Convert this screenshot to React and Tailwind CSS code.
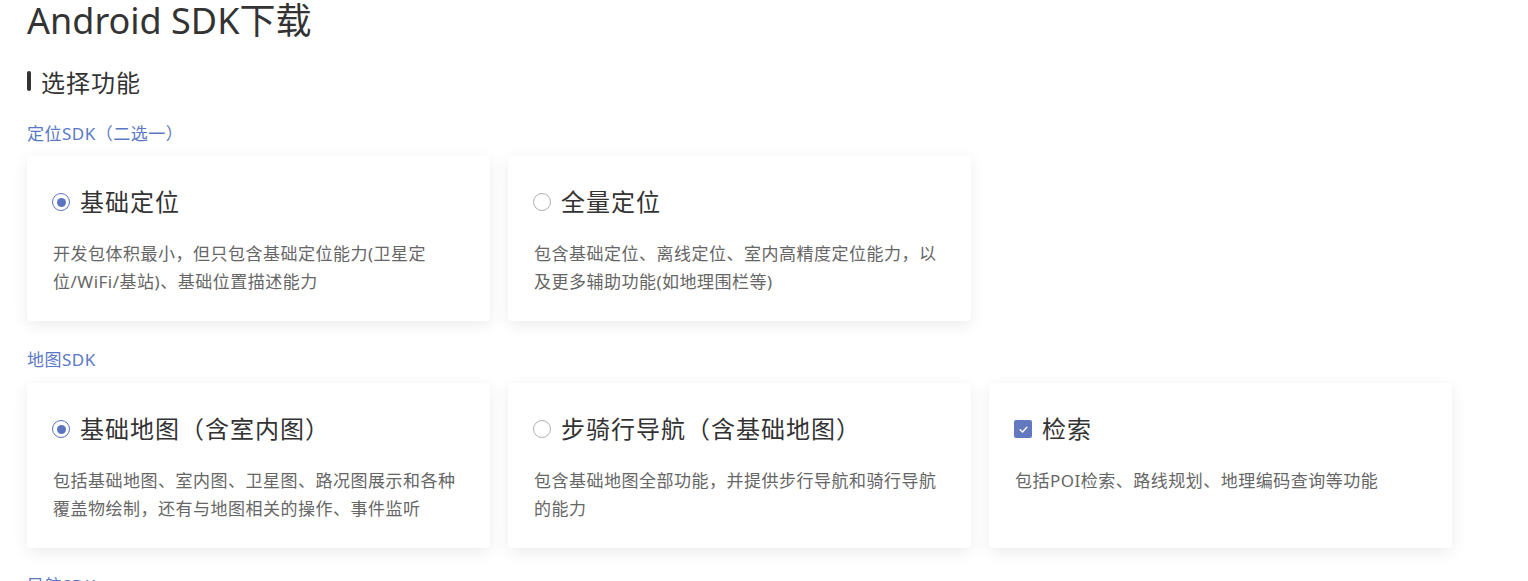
import React, { useState } from 'react';

const font = { fontFamily: '"Noto Sans", "Noto Sans CJK SC", sans-serif' };

const Radio = ({ checked }) => (
  <span
    className={`w-[18px] h-[18px] rounded-full border-[1.5px] flex items-center justify-center shrink-0 bg-white ${
      checked ? 'border-[#5b74c2]' : 'border-[#b0b0b0]'
    }`}
  >
    {checked && <span className="w-[9px] h-[9px] rounded-full bg-[#5b74c2]" />}
  </span>
);

const Checkbox = ({ checked }) => (
  <span
    className={`w-[18px] h-[18px] rounded-[2px] flex items-center justify-center shrink-0 ${
      checked ? 'bg-[#6279c0]' : 'border border-[#b0b0b0] bg-white'
    }`}
  >
    {checked && (
      <svg width="11" height="11" viewBox="0 0 10 10" fill="none">
        <path d="M2 5.2 4.1 7.2 8 3" stroke="#fff" strokeWidth="1.3" strokeLinecap="round" strokeLinejoin="round" />
      </svg>
    )}
  </span>
);

const Card = ({ type, checked, title, desc, onClick }) => (
  <div
    onClick={onClick}
    className="w-[463px] h-[165px] rounded-[4px] bg-white shadow-[0_4px_16px_rgba(0,0,0,0.08)] pl-[26px] pr-[26px] pt-[30px] cursor-pointer"
  >
    <div className="flex items-center gap-[10px] -ml-[1px]">
      {type === 'check' ? <Checkbox checked={checked} /> : <Radio checked={checked} />}
      <span className="text-[24px] leading-[32px] tracking-[1px] text-[#333]">{title}</span>
    </div>
    <p className="mt-[22px] text-[17px] leading-[28px] tracking-[0.5px] text-[#666]">{desc}</p>
  </div>
);

const Label = ({ children, className = '' }) => (
  <div className={`text-[17px] leading-[22px] tracking-[0.5px] text-[#5a78c5] ${className}`}>{children}</div>
);

export default function App() {
  const [loc, setLoc] = useState('basic');
  const [map, setMap] = useState('basic');
  const [search, setSearch] = useState(true);

  return (
    <div className="min-h-[581px] bg-white px-[27px] overflow-hidden" style={font}>
      <h1 className="text-[36px] leading-[42px] text-[#333]">Android SDK下载</h1>

      <div className="mt-[25px] flex items-center">
        <span className="w-1 h-5 rounded-full bg-[#333] mt-[-4px]" />
        <span className="ml-[10px] text-[24px] leading-[32px] tracking-[1px] text-[#333]">选择功能</span>
      </div>

      <Label className="mt-[24px]">定位SDK（二选一）</Label>
      <div className="mt-[11px] flex gap-[18px]">
        <Card
          checked={loc === 'basic'}
          onClick={() => setLoc('basic')}
          title="基础定位"
          desc="开发包体积最小，但只包含基础定位能力(卫星定位/WiFi/基站)、基础位置描述能力"
        />
        <Card
          checked={loc === 'full'}
          onClick={() => setLoc('full')}
          title="全量定位"
          desc="包含基础定位、离线定位、室内高精度定位能力，以及更多辅助功能(如地理围栏等)"
        />
      </div>

      <Label className="mt-[28px]">地图SDK</Label>
      <div className="mt-[12px] flex gap-[18px]">
        <Card
          checked={map === 'basic'}
          onClick={() => setMap('basic')}
          title="基础地图（含室内图）"
          desc="包括基础地图、室内图、卫星图、路况图展示和各种覆盖物绘制，还有与地图相关的操作、事件监听"
        />
        <Card
          checked={map === 'nav'}
          onClick={() => setMap('nav')}
          title="步骑行导航（含基础地图）"
          desc="包含基础地图全部功能，并提供步行导航和骑行导航的能力"
        />
        <Card
          type="check"
          checked={search}
          onClick={() => setSearch(!search)}
          title="检索"
          desc="包括POI检索、路线规划、地理编码查询等功能"
        />
      </div>

      <Label className="mt-[27px]">导航SDK</Label>
    </div>
  );
}
